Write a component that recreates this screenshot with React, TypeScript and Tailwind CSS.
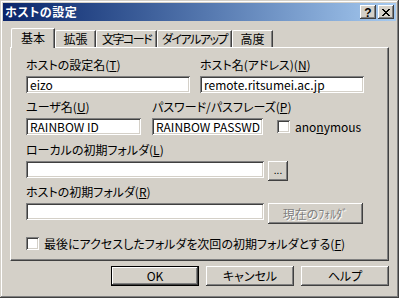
import { ReactNode } from 'react'

const raised =
  'shadow-[inset_-1px_-1px_#404040,inset_1px_1px_#ffffff,inset_-2px_-2px_#808080,inset_2px_2px_#d4d0c8]'
const sunken =
  'bg-white shadow-[inset_1px_1px_#808080,inset_-1px_-1px_#ffffff,inset_2px_2px_#404040,inset_-2px_-2px_#d4d0c8]'

function Field({ value, className }: { value?: string; className: string }) {
  return (
    <div className={`${sunken} ${className} flex items-center pl-[4px] text-black leading-none whitespace-nowrap`}>
      {value}
    </div>
  )
}

function Check({ className = '' }: { className?: string }) {
  return <div className={`${sunken} w-[13px] h-[13px] shrink-0 ${className}`} />
}

function Label({ children, className = '' }: { children: ReactNode; className?: string }) {
  return <div className={`h-[14px] leading-[14px] whitespace-nowrap ${className}`}>{children}</div>
}

function Tab({ label, active, w, tight }: { label: string; active?: boolean; w: string; tight?: boolean }) {
  const text = tight ? 'tracking-[-1.5px]' : ''
  if (active) {
    return (
      <div
        className={`${w} h-[20px] -mb-[1px] relative z-10 bg-[#d4d0c8] border-l border-t border-white rounded-tl-[2px] border-r border-r-[#404040] shadow-[inset_-1px_0_#808080] flex items-center justify-center pb-[2px] whitespace-nowrap`}
      >
        <span className={text}>{label}</span>
      </div>
    )
  }
  return (
    <div
      className={`${w} h-[17px] shrink-0 border-l border-t border-white rounded-tl-[2px] border-r border-r-[#404040] shadow-[inset_-1px_0_#808080] flex items-center justify-center whitespace-nowrap`}
    >
      <span className={text}>{label}</span>
    </div>
  )
}

function Button({
  children,
  className,
  def,
}: {
  children: ReactNode
  className: string
  def?: boolean
}) {
  return (
    <div className={`${className} ${def ? 'border border-black' : ''} flex shrink-0`}>
      <div className={`${raised} flex-1 bg-[#d4d0c8] flex items-center justify-center whitespace-nowrap`}>
        {children}
      </div>
    </div>
  )
}

export default function App() {
  return (
    <div className="w-[399px] h-[298px] bg-[#d4d0c8] shadow-[inset_-1px_-1px_#404040,inset_1px_1px_#d4d0c8,inset_-2px_-2px_#808080,inset_2px_2px_#ffffff] p-[3px] flex flex-col text-[12px] text-black font-['Noto_Sans_CJK_JP','Noto_Sans',sans-serif] [font-feature-settings:'palt'] overflow-hidden select-none">
      {/* title bar */}
      <div className="h-[18px] shrink-0 bg-gradient-to-r from-[#0a246a] to-[#a6caf0] flex items-center pl-[2px] pr-[2px]">
        <span className="text-white font-bold leading-none tracking-[0.5px]">ホストの設定</span>
        <div className="ml-auto flex gap-[2px]">
          <div className={`${raised} bg-[#d4d0c8] w-[16px] h-[14px] flex items-center justify-center`}>
            <span className="font-['Liberation_Sans',sans-serif] font-bold text-[12px] leading-none mt-[1px]">?</span>
          </div>
          <div className={`${raised} bg-[#d4d0c8] w-[16px] h-[14px] flex items-center justify-center`}>
            <svg width="8" height="7" viewBox="0 0 8 7" shapeRendering="crispEdges">
              <path
                d="M0 0h2v1h-2zM6 0h2v1h-2zM1 1h2v1h-2zM5 1h2v1h-2zM2 2h4v1h-4zM3 3h2v1h-2zM2 4h4v1h-4zM1 5h2v1h-2zM5 5h2v1h-2zM0 6h2v1h-2zM6 6h2v1h-2z"
                fill="#000"
              />
            </svg>
          </div>
        </div>
      </div>

      <div className="flex-1 flex flex-col px-[7px] pt-[6px]">
        {/* tabs */}
        <div className="flex items-end h-[20px] pl-[1px]">
          <Tab label="基本" active w="w-[44px]" />
          <Tab label="拡張" w="w-[41px]" />
          <Tab label="文字コード" w="w-[61px]" tight />
          <Tab label="ダイアルアップ" w="w-[75px]" tight />
          <Tab label="高度" w="w-[41px]" />
        </div>

        {/* panel */}
        <div className="h-[214px] border-l border-t border-white border-r border-b border-r-[#404040] border-b-[#404040] shadow-[inset_-1px_-1px_#808080] pl-[15px] pt-[10px] flex flex-col">
          <div className="flex">
            <div className="w-[174px]">
              <Label>
                ホストの設定名(<u>T</u>)
              </Label>
              <Field value="eizo" className="w-[164px] h-[17px] mt-[4px]" />
            </div>
            <div>
              <Label>
                ホスト名(アドレス)(<u>N</u>)
              </Label>
              <Field value="remote.ritsumei.ac.jp" className="w-[164px] h-[17px] mt-[4px]" />
            </div>
          </div>

          <div className="flex mt-[7px]">
            <div className="w-[126px]">
              <Label>
                ユーザ名(<u>U</u>)
              </Label>
              <Field value="RAINBOW ID" className="w-[115px] h-[17px] mt-[4px]" />
            </div>
            <div>
              <Label>
                パスワード/パスフレーズ(<u>P</u>)
              </Label>
              <div className="flex items-center mt-[4px]">
                <Field value="RAINBOW PASSWD" className="w-[111px] h-[17px]" />
                <Check className="ml-[14px]" />
                <span className="ml-[5px] leading-none">
                  ano<u>n</u>ymous
                </span>
              </div>
            </div>
          </div>

          <Label className="mt-[8px]">
            ローカルの初期フォルダ(<u>L</u>)
          </Label>
          <div className="flex items-start mt-[2px]">
            <Field className="w-[238px] h-[17px] mt-[2px]" />
            <Button className="w-[20px] h-[20px] ml-[4px] mt-[2px]">
              <span className="text-[10px] leading-none -mt-[2px]">...</span>
            </Button>
          </div>

          <Label className="mt-[4px]">
            ホストの初期フォルダ(<u>R</u>)
          </Label>
          <div className="flex items-start mt-[4px]">
            <Field className="w-[238px] h-[17px]" />
            <Button className="w-[95px] h-[21px] ml-[4px]">
              <span className="text-[#808080] [text-shadow:1px_1px_#ffffff]">現在のﾌｫﾙﾀﾞ</span>
            </Button>
          </div>

          <div className="flex items-center mt-[13px]">
            <Check />
            <span className="ml-[5px] leading-none whitespace-nowrap">
              最後にアクセスしたフォルダを次回の初期フォルダとする(<u>F</u>)
            </span>
          </div>
        </div>

        {/* dialog buttons */}
        <div className="flex justify-end gap-[7px] mt-[5px]">
          <Button def className="w-[88px] h-[20px]">
            OK
          </Button>
          <Button className="w-[88px] h-[20px]">キャンセル</Button>
          <Button className="w-[88px] h-[20px]">ヘルプ</Button>
        </div>
      </div>
    </div>
  )
}
